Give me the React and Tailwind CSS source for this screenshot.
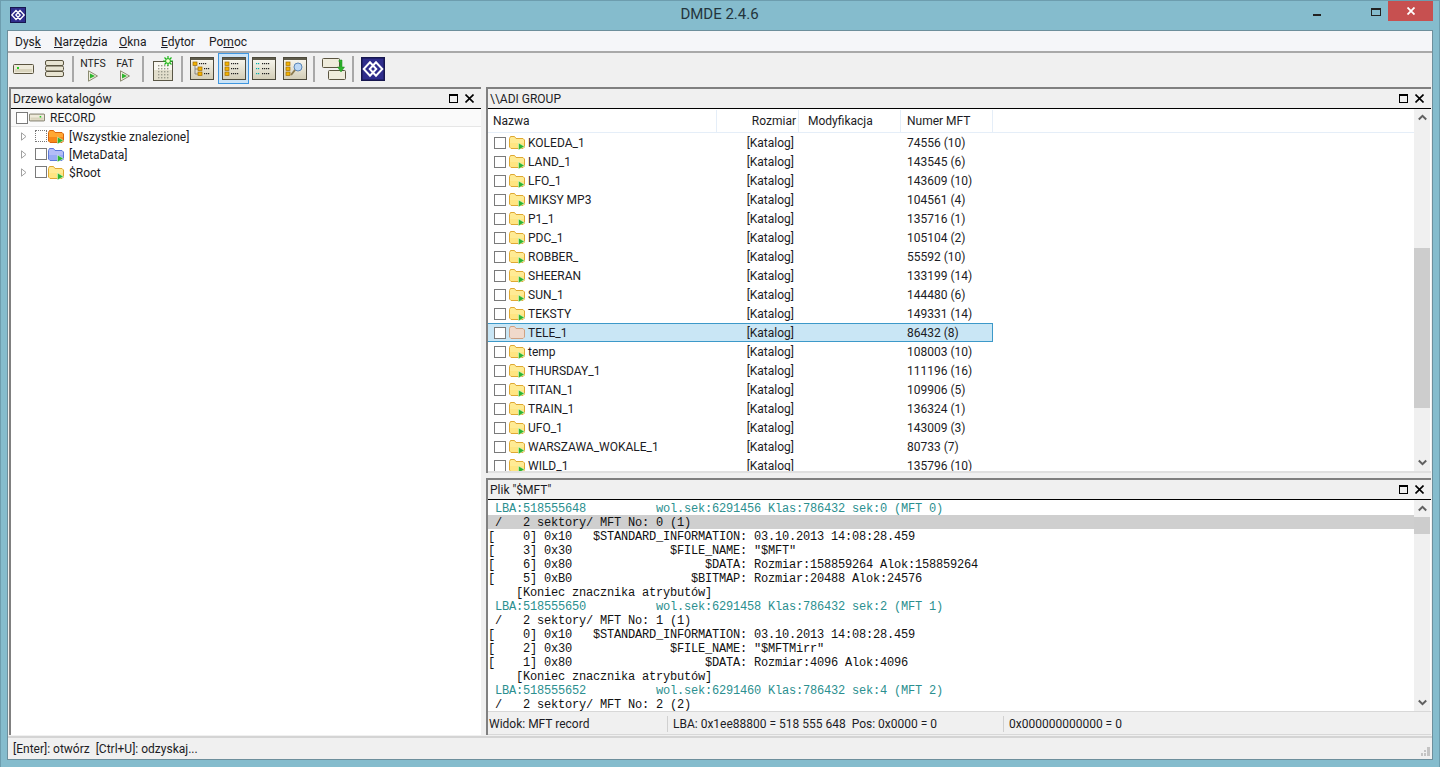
const FILES = [
  ["KOLEDA_1", "74556 (10)"],
  ["LAND_1", "143545 (6)"],
  ["LFO_1", "143609 (10)"],
  ["MIKSY MP3", "104561 (4)"],
  ["P1_1", "135716 (1)"],
  ["PDC_1", "105104 (2)"],
  ["ROBBER_", "55592 (10)"],
  ["SHEERAN", "133199 (14)"],
  ["SUN_1", "144480 (6)"],
  ["TEKSTY", "149331 (14)"],
  ["TELE_1", "86432 (8)"],
  ["temp", "108003 (10)"],
  ["THURSDAY_1", "111196 (16)"],
  ["TITAN_1", "109906 (5)"],
  ["TRAIN_1", "136324 (1)"],
  ["UFO_1", "143009 (3)"],
  ["WARSZAWA_WOKALE_1", "80733 (7)"],
  ["WILD_1", "135796 (10)"],
];

const LOG = [
  [" LBA:518555648          wol.sek:6291456 Klas:786432 sek:0 (MFT 0)", "teal"],
  [" /   2 sektory/ MFT No: 0 (1)", "sel"],
  ["[    0] 0x10   $STANDARD_INFORMATION: 03.10.2013 14:08:28.459"],
  ["[    3] 0x30              $FILE_NAME: \"$MFT\""],
  ["[    6] 0x80                   $DATA: Rozmiar:158859264 Alok:158859264"],
  ["[    5] 0xB0                 $BITMAP: Rozmiar:20488 Alok:24576"],
  ["    [Koniec znacznika atrybutów]"],
  [" LBA:518555650          wol.sek:6291458 Klas:786432 sek:2 (MFT 1)", "teal"],
  [" /   2 sektory/ MFT No: 1 (1)"],
  ["[    0] 0x10   $STANDARD_INFORMATION: 03.10.2013 14:08:28.459"],
  ["[    2] 0x30              $FILE_NAME: \"$MFTMirr\""],
  ["[    1] 0x80                   $DATA: Rozmiar:4096 Alok:4096"],
  ["    [Koniec znacznika atrybutów]"],
  [" LBA:518555652          wol.sek:6291460 Klas:786432 sek:4 (MFT 2)", "teal"],
  [" /   2 sektory/ MFT No: 2 (2)"],
];

function Logo({ size = 16 }) {
  return (
    <svg width={size} height={size} viewBox="0 0 16 16" className="shrink-0">
      <rect x="0.5" y="0.5" width="15" height="15" fill="#2f2d8c" stroke="#17174f" />
      <path d="M6 3.5 1.8 8 6 12.5 10.2 8zM10 3.5 5.8 8l4.2 4.5L14.2 8z" fill="none" stroke="#fff" strokeWidth="1.3" />
    </svg>
  );
}

function Check({ dotted }) {
  return (
    <span
      className={`block h-3 w-3 shrink-0 border bg-white ${dotted ? "border-dotted border-[#777]" : "border-[#7a7a7a]"}`}
    />
  );
}

const FOLDER = {
  yellow: ["#ffeb94", "#dfa832", "#ffe27a"],
  orange: ["#ffa733", "#d9660c", "#f47a10"],
  blue: ["#b3bcf7", "#5b78d8", "#8fa4f2"],
  pale: ["#f0d9cb", "#cfa283", "#f0d9cb"],
};

function Folder({ color = "yellow", arrow = true }) {
  const [fill, line, lower] = FOLDER[color];
  return (
    <svg width="16" height="15" viewBox="0 0 16 15" className="shrink-0">
      <path d="M.5 3.5 1.5 1.5h4l1.5 2h7l1.5 1.5v7l-1.5 1.5h-12L.5 12z" fill={fill} stroke={line} />
      <path d="M1 8h14v4l-1 1H2l-1-1z" fill={lower} opacity=".7" />
      {arrow && <path d="M9.5 8l6 3.5-6 3.5z" fill="#2fb52f" stroke="#e8ffe8" strokeWidth=".5" />}
    </svg>
  );
}

function Drive({ w = 21, h = 10, led = "left" }) {
  return (
    <svg width={w} height={h} viewBox="0 0 21 10" className="shrink-0">
      <rect x=".5" y=".5" width="20" height="9" rx="1" fill="#eeeada" stroke="#5a5440" />
      <rect x="2" y="5" width="17" height="3" fill="#d9d4bd" />
      <rect x={led === "left" ? 4 : 14} y="3" width="2" height="2" fill="#22cc22" />
    </svg>
  );
}

function Drives() {
  return (
    <svg width="19" height="17" viewBox="0 0 19 17">
      {[0.5, 6, 11.5].map((y) => (
        <rect key={y} x=".5" y={y} width="18" height="5" rx="1.5" fill="#e8e4d2" stroke="#5a5440" />
      ))}
    </svg>
  );
}

function Play() {
  return (
    <svg width="12" height="12" viewBox="0 0 12 12">
      <path d="M1.5.8 10.5 6l-9 5.2z" fill="#eeeedd" stroke="#8a8a70" />
      <path d="M3 3.5 8 6l-5 2.5z" fill="#2fb52f" />
    </svg>
  );
}

function FsButton({ label, width }) {
  return (
    <div className={`flex flex-col items-center ${width}`}>
      <span className="pt-px text-[10.5px] leading-[13px] text-[#222]">{label}</span>
      <Play />
    </div>
  );
}

function PaneIcon({ children }) {
  return (
    <svg width="24" height="23" viewBox="0 0 24 23">
      <defs>
        <linearGradient id="pane" x1="0" y1="0" x2="0" y2="1">
          <stop offset="0" stopColor="#fbfaf3" />
          <stop offset="1" stopColor="#d2cdb6" />
        </linearGradient>
      </defs>
      <rect x=".5" y=".5" width="23" height="22" fill="url(#pane)" stroke="#4d4a3c" />
      <rect x="1" y="1" width="22" height="2" fill="#5f5c4c" />
      {children}
    </svg>
  );
}

function Node({ x, y }) {
  return <rect x={x} y={y} width="4" height="3.4" fill="#f2b200" stroke="#a06c00" strokeWidth=".7" />;
}

function Dots({ x, y, color = "#222", n = 4 }) {
  return Array.from({ length: n }, (_, i) => (
    <rect key={i} x={x + i * 2} y={y} width="1.2" height="1.2" fill={color} />
  ));
}

function NewIcon() {
  return (
    <svg width="21" height="25" viewBox="0 0 21 25">
      <rect x=".5" y="5.5" width="19" height="19" fill="#e2decc" stroke="#5a5746" />
      <rect x="1" y="6" width="18" height="8" fill="#f8f7f0" />
      {[9, 12, 15, 18, 21].map((y) =>
        [5, 8, 11, 14].map((x) => <rect key={`${x}${y}`} x={x} y={y} width="1.4" height="1.4" fill="#9a9a8c" />)
      )}
      <path d="M15 0v10M10 5h10M11.5 1.5l7 7M18.5 1.5l-7 7" stroke="#19b419" strokeWidth="1.2" />
      <circle cx="15" cy="5" r="2.4" fill="#f4ffd0" stroke="#19b419" />
    </svg>
  );
}

function MoveIcon() {
  return (
    <svg width="24" height="24" viewBox="0 0 24 24">
      <rect x=".5" y="1.5" width="17" height="9" rx="1" fill="#efecdc" stroke="#5a5440" />
      <rect x="6.5" y="13.5" width="17" height="9" rx="1" fill="#efecdc" stroke="#5a5440" />
      <path d="M17 3h3v7h2.5L19 15l-3.5-5H18V5h-1z" fill="#2fb52f" stroke="#1a8a1a" strokeWidth=".5" />
    </svg>
  );
}

function Sep({ mx }) {
  return <span className={`h-[26px] w-0.5 shrink-0 bg-[#a8a8a8] ${mx}`} />;
}

function PanelButtons() {
  return (
    <div className="flex items-center gap-[7px]">
      <span className="block h-[9px] w-[9px] border border-t-2 border-black" />
      <svg width="9" height="9" viewBox="0 0 9 9" className="mr-[1px]">
        <path d="M.5.5l8 8M8.5.5l-8 8" stroke="#000" strokeWidth="1.6" />
      </svg>
    </div>
  );
}

function PanelTitle({ title }) {
  return (
    <div className="flex h-5 shrink-0 items-center justify-between border-b border-black bg-[#f0f0f0] pl-[2px] pr-[6px]">
      <span>{title}</span>
      <PanelButtons />
    </div>
  );
}

function Chevron({ up }) {
  return (
    <svg width="9" height="7" viewBox="0 0 9 7" className="shrink-0">
      <path d={up ? "M.8 5.5 4.5 1.8l3.7 3.7" : "M.8 1.5l3.7 3.7 3.7-3.7"} fill="none" stroke="#606060" strokeWidth="2" />
    </svg>
  );
}

function Scrollbar({ before, thumb }) {
  return (
    <div className="flex w-4 shrink-0 flex-col items-center bg-[#f0f0f0]">
      <div className="flex h-[17px] shrink-0 items-center justify-center">
        <Chevron up />
      </div>
      <div className="w-full shrink-0" style={{ height: before }} />
      <div className="w-full shrink-0 bg-[#cdcdcd]" style={{ height: thumb }} />
      <div className="flex-1" />
      <div className="flex h-[17px] shrink-0 items-center justify-center">
        <Chevron />
      </div>
    </div>
  );
}

function FileRow({ name, mft, selected }) {
  return (
    <div
      className={`flex h-[19px] w-[506px] items-center border-y ${
        selected ? "-ml-px border-x border-[#3c99c9] bg-[#c9e6f5]" : "border-transparent"
      }`}
    >
      <div className="flex w-[229px] items-center pl-[6px]">
        <Check />
        <span className="ml-[3px]">
          <Folder color={selected ? "pale" : "yellow"} arrow={!selected} />
        </span>
        <span className="ml-[3px]">{name}</span>
      </div>
      <div className="w-[82px] pr-[5px] text-right">[Katalog]</div>
      <div className="w-[102px]" />
      <div className="pl-[6px]">{mft}</div>
    </div>
  );
}

function TreeRow({ label, color, dotted }) {
  return (
    <div className="flex h-[18px] items-center pl-[10px]">
      <svg width="6" height="9" viewBox="0 0 6 9" className="shrink-0">
        <path d="M.5.8 5 4.5.5 8.2z" fill="#fff" stroke="#a0a0a0" />
      </svg>
      <span className="ml-[8px]">
        <Check dotted={dotted} />
      </span>
      <span className="ml-[1px]">
        <Folder color={color} />
      </span>
      <span className="ml-[5px] pt-px">{label}</span>
    </div>
  );
}

export default function App() {
  return (
    <div className="flex h-[767px] w-[1440px] flex-col overflow-hidden border-x border-t border-[#6d9dae] bg-[#85bccd] font-['Roboto',sans-serif] text-[12px] leading-[16px] text-[#1c1c24]">
      {/* title bar */}
      <div className="flex h-[29px] shrink-0 items-start">
        <div className="ml-[9px] mt-[6px]">
          <Logo />
        </div>
        <div className="flex-1 pl-[100px] pt-[3px] text-center text-[15px] leading-[20px] text-[#24353d]">DMDE 2.4.6</div>
        <div className="mr-[50px] mt-[13px] h-0.5 w-2 bg-[#222]" />
        <div className="mr-[7px] mt-[7px] h-[8px] w-[10px] border border-t-2 border-[#222]" />
        <div className="mr-[6px] flex h-5 w-[45px] items-center justify-center bg-[#c75050]">
          <svg width="8" height="8" viewBox="0 0 8 8">
            <path d="M.5.5l7 7M7.5.5l-7 7" stroke="#fff" strokeWidth="1.8" />
          </svg>
        </div>
      </div>

      {/* client area */}
      <div className="mx-[6px] mb-[7px] flex min-h-0 flex-1 flex-col border border-[#6d8f9c] bg-[#f0f0f0]">
        <div className="flex h-5 shrink-0 items-center bg-[#f5f6f9] pl-[7px] pt-[1px]">
          <span className="w-[39px]">Dys<u>k</u></span>
          <span className="w-[65px]"><u>N</u>arzędzia</span>
          <span className="w-[42px]"><u>O</u>kna</span>
          <span className="w-[48px]"><u>E</u>dytor</span>
          <span>Po<u>m</u>oc</span>
        </div>
        <div className="h-0.5 shrink-0 bg-[#a9a9a9]" />

        {/* toolbar */}
        <div className="flex h-[34px] shrink-0 items-center pb-[3px] pl-[5px]">
          <Drive />
          <span className="ml-[11px]"><Drives /></span>
          <Sep mx="ml-[8px] mr-[7px]" />
          <FsButton label="NTFS" width="w-6" />
          <FsButton label="FAT" width="ml-[9px] w-[22px]" />
          <Sep mx="ml-[6px] mr-[9px]" />
          <NewIcon />
          <Sep mx="ml-[7px] mr-[7px]" />
          <PaneIcon>
            <Node x={3} y={5} /><Dots x={9} y={6} />
            <path d="M5 8v9h3M5 12h3" stroke="#777" fill="none" strokeWidth=".8" />
            <Node x={8} y={10} /><Dots x={14} y={11} n={3} />
            <Node x={8} y={15} /><Dots x={14} y={16} n={3} />
          </PaneIcon>
          <div className="ml-[4px] flex h-[31px] w-[31px] items-center justify-center border border-[#3f97e0] bg-[#cce4f7]">
            <PaneIcon>
              <Node x={3} y={5} /><Dots x={9} y={6} />
              <Node x={3} y={10} /><Dots x={9} y={11} />
              <Node x={3} y={15} /><Dots x={9} y={16} />
            </PaneIcon>
          </div>
          <span className="ml-[3px]">
            <PaneIcon>
              <Dots x={4} y={6} color="#00b0b0" n={2} /><Dots x={10} y={6} n={4} />
              <Dots x={4} y={11} color="#00b0b0" n={2} /><Dots x={10} y={11} n={4} />
              <Dots x={4} y={16} color="#00b0b0" n={2} /><Dots x={10} y={16} n={4} />
            </PaneIcon>
          </span>
          <span className="ml-[7px]">
            <PaneIcon>
              <Node x={3} y={5} /><Node x={3} y={10} /><Node x={3} y={15} />
              <circle cx="15" cy="10" r="4" fill="#bcd8f5" stroke="#5a86b8" />
              <path d="M12 13l-4 5" stroke="#8a7a50" strokeWidth="2" />
            </PaneIcon>
          </span>
          <Sep mx="ml-[6px] mr-[7px]" />
          <MoveIcon />
          <Sep mx="ml-[6px] mr-[7px]" />
          <Logo size={24} />
        </div>

        {/* panels */}
        <div className="flex min-h-0 flex-1 pl-[1px]">
          <div className="flex w-[472px] shrink-0 flex-col border-l-2 border-t-2 border-[#808080]">
            <PanelTitle title="Drzewo katalogów" />
            <div className="flex-1 bg-white">
              <div className="flex h-[18px] items-center border-b border-[#e6e6e6] bg-[#fafafa] pl-[5px]">
                <Check />
                <span className="ml-[1px]"><Drive w={16} h={9} led="right" /></span>
                <span className="ml-[5px] pt-px">RECORD</span>
              </div>
              <div>
                <TreeRow label="[Wszystkie znalezione]" color="orange" dotted />
                <TreeRow label="[MetaData]" color="blue" />
                <TreeRow label="$Root" color="yellow" />
              </div>
            </div>
          </div>

          <div className="ml-[5px] flex w-[945px] flex-col">
            {/* file list */}
            <div className="flex h-[386px] shrink-0 flex-col border-l-2 border-t-2 border-[#808080]">
              <PanelTitle title="\\ADI GROUP" />
              <div className="flex min-h-0 flex-1 border-b-2 border-[#e0e0e0] bg-white">
                <div className="flex min-w-0 flex-1 flex-col overflow-hidden">
                  <div className="flex h-6 shrink-0 items-center border-b border-[#e5eef8] pt-px">
                    <div className="flex h-full w-[229px] items-center border-r border-[#e5eef8] pl-[5px]">Nazwa</div>
                    <div className="flex h-full w-[82px] items-center justify-end border-r border-[#e5eef8] pr-[2px]">Rozmiar</div>
                    <div className="flex h-full w-[102px] items-center border-r border-[#e5eef8] pl-[9px]">Modyfikacja</div>
                    <div className="flex h-full w-[92px] items-center border-r border-[#e5eef8] pl-[6px]">Numer MFT</div>
                  </div>
                  <div className="min-h-0 flex-1 overflow-hidden">
                    {FILES.map(([name, mft]) => (
                      <FileRow key={name} name={name} mft={mft} selected={name === "TELE_1"} />
                    ))}
                  </div>
                </div>
                <Scrollbar before={122} thumb={160} />
                <div className="w-px shrink-0" />
              </div>
            </div>

            <div className="h-[5px] shrink-0" />

            {/* record view */}
            <div className="flex min-h-0 flex-1 flex-col border-l-2 border-t-2 border-[#808080]">
              <PanelTitle title='Plik "$MFT"' />
              <div className="flex min-h-0 flex-1 bg-white">
                <div className="min-w-0 flex-1 overflow-hidden pt-[1px] font-['Liberation_Mono',monospace] text-[12px] leading-[14px] tracking-[-0.2px]">
                  {LOG.map(([text, kind], i) => (
                    <div
                      key={i}
                      className={`h-[14px] whitespace-pre ${
                        kind === "teal" ? "text-[#2b8f8f]" : kind === "sel" ? "bg-[#cfcfcf] text-[#111]" : "text-[#111]"
                      }`}
                    >
                      <span className="relative top-px">{text}</span>
                    </div>
                  ))}
                </div>
                <Scrollbar before={0} thumb={17} />
                <div className="w-px shrink-0" />
              </div>
              <div className="flex h-[24px] shrink-0 items-center border-y border-[#d8d8d8] bg-[#f0f0f0] pt-px">
                <div className="w-[180px] border-r border-[#d0d0d0] pl-[1px]">Widok: MFT record</div>
                <div className="w-[336px] whitespace-pre border-r border-[#d0d0d0] pl-[5px]">LBA: 0x1ee88800 = 518 555 648  Pos: 0x0000 = 0</div>
                <div className="pl-[5px]">0x000000000000 = 0</div>
              </div>
            </div>
          </div>
        </div>

        {/* status bar */}
        <div className="relative mt-[1px] flex h-[23px] shrink-0 items-center whitespace-pre border-t-2 border-[#d4d4d4] pl-[5px]">
          [Enter]: otwórz  [Ctrl+U]: odzyskaj...
          <svg width="9" height="9" viewBox="0 0 9 9" className="absolute bottom-[3px] right-[2px]">
            <path d="M6 0h3v3H6zM3 3h2v2H3zM6 3h3v3H6zM0 6h2v3H0zM3 6h2v3H3zM6 6h3v3H6z" fill="#c4c4c4" />
          </svg>
        </div>
      </div>
    </div>
  );
}
